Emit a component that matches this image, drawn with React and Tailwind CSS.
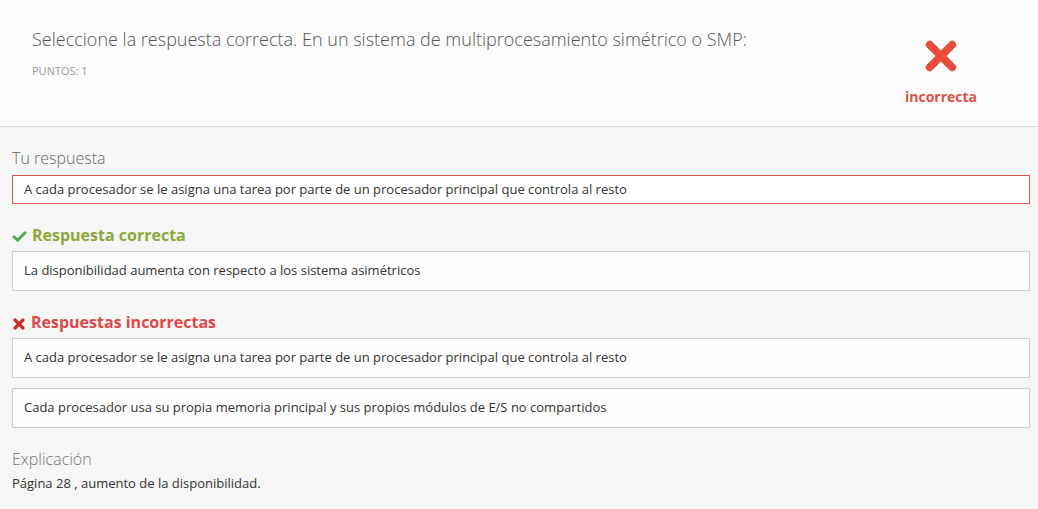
import React from "react";

function BigX({ className }) {
  return (
    <svg viewBox="0 0 32 32" className={className}>
      <path d="M6 6 L26 26 M26 6 L6 26" stroke="currentColor" strokeWidth="7" strokeLinecap="round" fill="none" />
    </svg>
  );
}

function SmallX({ className }) {
  return (
    <svg viewBox="0 0 14 14" className={className}>
      <path d="M3 3 L11 11 M11 3 L3 11" stroke="currentColor" strokeWidth="3.2" strokeLinecap="round" fill="none" />
    </svg>
  );
}

function Check({ className }) {
  return (
    <svg viewBox="0 0 16 14" className={className}>
      <path d="M2 7.5 L6 11 L14 3" stroke="currentColor" strokeWidth="3.2" strokeLinecap="round" strokeLinejoin="round" fill="none" />
    </svg>
  );
}

export default function App() {
  return (
    <div className="w-[1038px] h-[509px] overflow-hidden bg-[#f6f6f6] text-[#333]" style={{ fontFamily: '"Open Sans", sans-serif' }}>
      <div className="h-[127px] bg-[#fcfcfc] border-b border-[#dcdcdc] flex">
        <div className="flex-1 pl-[32px] pt-[26px]">
          <div className="text-[18px] leading-[26px] text-[#555] font-light">
            Seleccione la respuesta correcta. En un sistema de multiprocesamiento simétrico o SMP:
          </div>
          <div className="mt-[12px] text-[11px] leading-[14px] text-[#999]">PUNTOS: 1</div>
        </div>
        <div className="w-[140px] flex flex-col items-center pt-[38px] pr-[54px]">
          <BigX className="w-[36px] h-[36px] text-[#e74c3c]" />
          <div className="mt-[14px] text-[14px] leading-[18px] font-bold text-[#e0504a]">incorrecta</div>
        </div>
      </div>

      <div className="px-[12px] pr-[8px] pt-[21px]">
        <div className="text-[16px] leading-[20px] font-light text-[#666]">Tu respuesta</div>
        <div className="mt-[7px] h-[29px] flex items-center px-[11px] bg-white border border-[#d9534f] text-[13px]">
          A cada procesador se le asigna una tarea por parte de un procesador principal que controla al resto
        </div>

        <div className="mt-[20px] flex items-center gap-[5px] h-[22px]">
          <Check className="w-[15px] h-[13px] text-[#4cae4c] mt-[3px]" />
          <span className="text-[16px] font-bold text-[#8fa83a]">Respuesta correcta</span>
        </div>
        <div className="mt-[5px] h-[40px] flex items-center px-[11px] bg-[#fdfdfd] border border-[#d0d0d0] text-[13px]">
          La disponibilidad aumenta con respecto a los sistema asimétricos
        </div>

        <div className="mt-[20px] flex items-center gap-[5px] h-[22px]">
          <SmallX className="w-[14px] h-[14px] text-[#c9302c] mt-[3px]" />
          <span className="text-[16px] font-bold text-[#e04848]">Respuestas incorrectas</span>
        </div>
        <div className="mt-[5px] h-[40px] flex items-center px-[11px] bg-[#fdfdfd] border border-[#d0d0d0] text-[13px]">
          A cada procesador se le asigna una tarea por parte de un procesador principal que controla al resto
        </div>
        <div className="mt-[10px] h-[40px] flex items-center px-[11px] bg-[#fdfdfd] border border-[#d0d0d0] text-[13px]">
          Cada procesador usa su propia memoria principal y sus propios módulos de E/S no compartidos
        </div>

        <div className="mt-[20px] text-[16px] leading-[22px] font-light text-[#777]">Explicación</div>
        <div className="mt-[5px] text-[13px] leading-[16px]">Página 28 , aumento de la disponibilidad.</div>
      </div>
    </div>
  );
}
